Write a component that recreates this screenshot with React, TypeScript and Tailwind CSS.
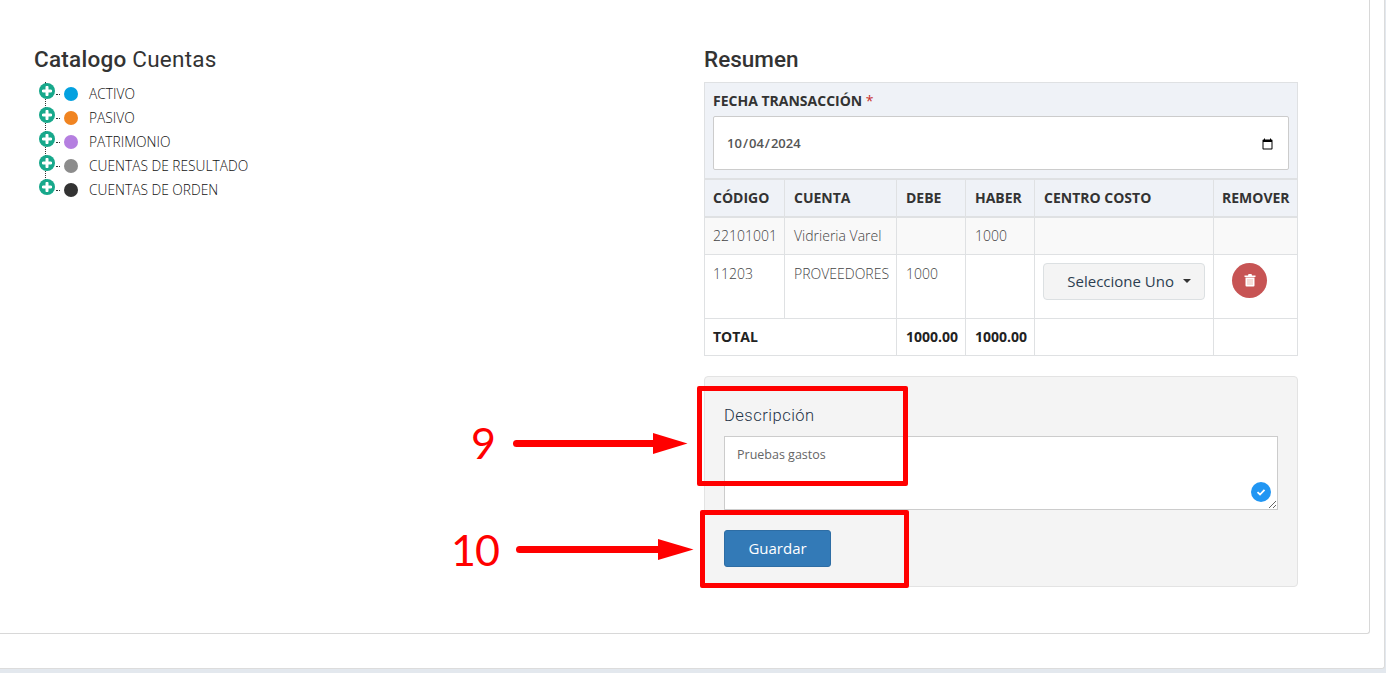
const cuentas = [
  { name: "ACTIVO", dot: "bg-[#03a1e0]" },
  { name: "PASIVO", dot: "bg-[#f08421]" },
  { name: "PATRIMONIO", dot: "bg-[#b57fe0]" },
  { name: "CUENTAS DE RESULTADO", dot: "bg-[#8c8c8c]" },
  { name: "CUENTAS DE ORDEN", dot: "bg-[#333333]" },
];

const th = "border border-t-2 border-b-2 border-[#dfe1e3] bg-[#eff2f7] pr-2 pb-[2px] text-left text-[14px] font-bold text-[#333]";
const td = "border border-[#dfe1e3] pr-2 align-top text-[14px] font-light text-[#444]";
const tf = "border border-[#dfe1e3] pr-2 text-[14px] font-bold text-[#222]";

function TreeRow({ name, dot }: { name: string; dot: string }) {
  return (
    <li className="relative flex h-6 items-center">
      <span className="relative -top-[3px] ml-[5px] flex h-4 w-4 items-center justify-center rounded-full bg-[#17a88b]">
        <svg viewBox="0 0 10 10" className="h-[10px] w-[10px]">
          <path d="M5 1.2v7.6M1.2 5h7.6" stroke="#fff" strokeWidth="3" strokeLinecap="round" />
        </svg>
      </span>
      <span className="ml-px w-[4px] border-t border-dotted border-[#333]" />
      <span className={`ml-[4px] h-[14px] w-[14px] rounded-full ${dot}`} />
      <span className="ml-[11px] text-[13.750px] font-light text-[#111]">{name}</span>
    </li>
  );
}

function TreeList() {
  return (
    <ul className="relative mt-[8px]">
      <span className="absolute top-[0px] left-[11px] h-[104px] border-l border-dotted border-[#333]" />
      {cuentas.map((c) => (
        <TreeRow key={c.name} name={c.name} dot={c.dot} />
      ))}
    </ul>
  );
}

function Annotations() {
  return (
    <>
      <div className="absolute top-[386px] left-[697px] h-[100px] w-[211px] rounded-[2px] border-[5px] border-[#ff0000]" />
      <div className="absolute top-[510px] left-[700px] h-[78px] w-[209px] rounded-[2px] border-[5px] border-[#ff0000]" />
      <span className="absolute top-[416px] left-[471px] font-['Lato',sans-serif] text-[43px] leading-[54px] text-[#ff0000]">9</span>
      <span className="absolute top-[523px] left-[451px] font-['Lato',sans-serif] text-[43px] leading-[54px] tracking-[-1px] text-[#ff0000]">10</span>
      <svg className="absolute top-[425px] left-[505px] h-[140px] w-[200px]" viewBox="0 0 200 140">
        <path d="M11.500 18.500H150" stroke="#ff0000" strokeWidth="7" strokeLinecap="round" />
        <path d="M148 8L182.500 18.500L148 29Z" fill="#ff0000" />
        <path d="M14.500 124.500H155" stroke="#ff0000" strokeWidth="7" strokeLinecap="round" />
        <path d="M153 114L188.500 124.500L153 135Z" fill="#ff0000" />
      </svg>
    </>
  );
}

export default function App() {
  return (
    <div className="relative h-[673px] w-[1386px] overflow-hidden bg-[#e3e8ee] font-['Open_Sans',sans-serif]">
      <div className="h-[669px] w-[1385px] rounded-br-[3px] border-r border-b border-[#dcdcdc] bg-white">
        <div className="flex h-[634px] w-[1370px] rounded-br-[3px] border-r border-b border-[#d8d8d8] pt-[44px] pl-[34px]">
          <div className="w-[670px]">
            <h3 className="font-['Roboto',sans-serif] text-[22.500px] leading-[30px] font-normal tracking-[0.25px] text-[#333]">
              <span className="font-medium">Catalogo</span> Cuentas
            </h3>
            <TreeList />
          </div>

          <div className="w-[594px]">
            <h3 className="font-['Roboto',sans-serif] text-[22.500px] leading-[30px] font-medium text-[#333]">Resumen</h3>

            <div className="mt-[8px] h-[96px] border border-b-0 border-[#dfe1e3] bg-[#eff2f7] px-2 pt-[8px]">
              <label className="block text-[14px] leading-[20px] font-bold text-[#333]">
                FECHA TRANSACCIÓN <span className="font-normal text-[#c9302c]">*</span>
              </label>
              <input
                type="date"
                defaultValue="2024-10-04"
                className="mt-[5px] h-[54px] w-[576px] rounded-[2px] border border-[#ccc] bg-white px-[12px] pt-[2px] text-[13px] font-semibold text-[#555]"
              />
            </div>

            <table className="w-[593px] table-fixed border-collapse">
              <colgroup>
                <col className="w-[80px]" />
                <col className="w-[112px]" />
                <col className="w-[69px]" />
                <col className="w-[69px]" />
                <col className="w-[179px]" />
                <col className="w-[84px]" />
              </colgroup>
              <thead>
                <tr className="h-[38px]">
                  <th className={`${th} pl-2`}>CÓDIGO</th>
                  <th className={`${th} pl-[9px]`}>CUENTA</th>
                  <th className={`${th} pl-[9px]`}>DEBE</th>
                  <th className={`${th} pl-[9px]`}>HABER</th>
                  <th className={`${th} pl-[9px]`}>CENTRO COSTO</th>
                  <th className={`${th} pl-2`}>REMOVER</th>
                </tr>
              </thead>
              <tbody>
                <tr className="h-[37px] bg-[#f9f9f9]">
                  <td className={`${td} pt-[7px] pl-2`}>22101001</td>
                  <td className={`${td} pt-[7px] pl-[9px]`}>Vidrieria Varel</td>
                  <td className={td} />
                  <td className={`${td} pt-[7px] pl-[9px]`}>1000</td>
                  <td className={td} />
                  <td className={td} />
                </tr>
                <tr className="h-[64px]">
                  <td className={`${td} pt-[8px] pl-2`}>11203</td>
                  <td className={`${td} pt-[8px] pl-[9px]`}>PROVEEDORES</td>
                  <td className={`${td} pt-[8px] pl-[9px]`}>1000</td>
                  <td className={td} />
                  <td className={`${td} pt-[8px] pl-2`}>
                    <button className="flex h-[37px] w-[162px] items-center justify-end rounded-[4px] border border-[#dce0e2] bg-[#f4f4f4] pr-[13px] text-[15px] font-normal text-[#2c3e50]">
                      Seleccione Uno
                      <span className="ml-[9px] h-0 w-0 border-x-[4px] border-t-[4px] border-x-transparent border-t-[#333]" />
                    </button>
                  </td>
                  <td className={`${td} pt-[8px] pl-2`}>
                    <button className="ml-[10px] flex h-[35px] w-[35px] items-center justify-center rounded-full bg-[#c75454]">
                      <svg viewBox="0 0 12 14" className="h-[14px] w-[12px]">
                        <path d="M0.500 2.500h11v1.500h-11zM4 2.500L4.500 1h3L8 2.500z" fill="#fff" />
                        <path d="M1.500 4.500h9v8a1 1 0 0 1-1 1h-7a1 1 0 0 1-1-1z" fill="#fff" />
                        <path d="M4 6v6M6 6v6M8 6v6" stroke="#e9a9a0" strokeWidth="0.800" />
                      </svg>
                    </button>
                  </td>
                </tr>
                <tr className="h-[37px]">
                  <td className={`${tf} pl-2`} colSpan={2}>TOTAL</td>
                  <td className={`${tf} pl-[9px]`}>1000.00</td>
                  <td className={`${tf} pl-[9px]`}>1000.00</td>
                  <td className={tf} />
                  <td className={tf} />
                </tr>
              </tbody>
            </table>

            <div className="mt-[20px] h-[211px] rounded-[4px] border border-[#e3e3e3] bg-[#f4f4f4] px-[19px] pt-[27px]">
              <label className="block font-['Roboto',sans-serif] text-[16.500px] leading-[24px] tracking-[0.5px] font-light text-[#1f3347]">Descripción</label>
              <div className="relative mt-[8px] h-[74px] w-[554px]">
                <textarea
                  defaultValue="Pruebas gastos"
                  className="h-[74px] w-[554px] border border-[#ccc] bg-white px-3 py-[8px] text-[12.500px] leading-[20px] font-normal text-[#666] outline-none"
                />
                <span className="absolute top-[46px] right-[7px] flex h-5 w-5 items-center justify-center rounded-full bg-[#2196f3]">
                  <svg viewBox="0 0 10 10" className="h-[10px] w-[10px]">
                    <path d="M1.500 5.200L4 7.500L8.500 2.800" stroke="#fff" strokeWidth="1.800" fill="none" />
                  </svg>
                </span>
              </div>
              <button className="mt-[20px] h-[37px] w-[107px] rounded-[3px] border border-[#2e6da4] bg-[#337ab7] text-[15px] text-white">
                Guardar
              </button>
            </div>
          </div>
        </div>
      </div>
      <Annotations />
    </div>
  );
}
